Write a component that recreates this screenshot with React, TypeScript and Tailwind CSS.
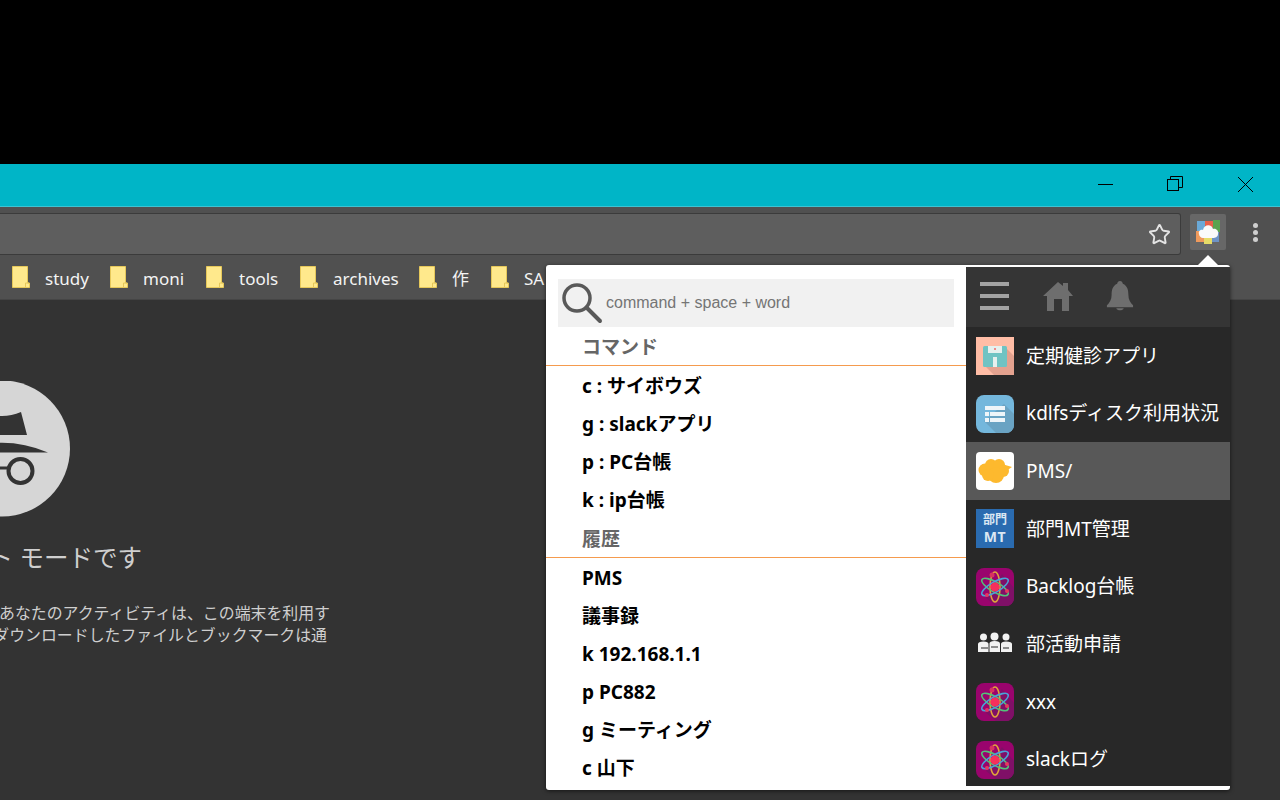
import { Star } from "lucide-react";
import type { ReactNode } from "react";

const sans = "font-['Noto_Sans','Noto_Sans_CJK_JP',sans-serif]";

function FloppyIcon() {
  return (
    <svg viewBox="0 0 38 38" className="h-[38px] w-[38px]">
      <rect width="38" height="38" fill="#ffbda6" />
      <path d="M10 30 L31 12 L38 19 V38 H18 Z" fill="#e3a28f" />
      <rect x="7" y="9" width="24" height="21" rx="1.5" fill="#6fc3c3" />
      <rect x="12" y="9" width="14" height="7" fill="#e6f0ee" />
      <rect x="18" y="11" width="2" height="2" fill="#ef8a8a" />
      <rect x="17" y="20" width="4" height="10" fill="#e6f0ee" />
    </svg>
  );
}

function ListIcon() {
  return (
    <svg viewBox="0 0 38 38" className="h-[38px] w-[38px] rounded-lg">
      <rect width="38" height="38" fill="#74b7dc" />
      <path d="M8 26 L28 9 L38 19 V38 H20 Z" fill="#6aa3c3" />
      <g fill="#eef5f9">
        <rect x="9" y="11" width="20" height="4" />
        <rect x="9" y="17" width="4" height="4" />
        <rect x="14" y="17" width="15" height="4" />
        <rect x="9" y="23" width="4" height="4" />
        <rect x="14" y="23" width="15" height="4" />
      </g>
    </svg>
  );
}

function CloudIcon() {
  return (
    <svg viewBox="0 0 38 38" className="h-[38px] w-[38px] rounded-sm" fill="#fdb92e">
      <rect width="38" height="38" fill="#ffffff" />
      <circle cx="9" cy="18" r="6.5" />
      <circle cx="15" cy="13" r="6" />
      <circle cx="23" cy="13" r="6" />
      <circle cx="27" cy="19" r="6" />
      <circle cx="20" cy="23" r="8" />
      <circle cx="12" cy="23" r="6" />
      <path d="M26 12 L36 15 L30 19 Z" />
    </svg>
  );
}

function DeptIcon() {
  return (
    <div className="flex h-[39px] w-[38px] flex-col items-center justify-center bg-[#2a6bb0] font-['Noto_Sans','Noto_Sans_CJK_JP',sans-serif] font-bold text-[#dbe7f3]">
      <span className="text-[12px] leading-[16px]">部門</span>
      <span className="text-[14px] leading-[18px] tracking-[0.5px]">MT</span>
    </div>
  );
}

function AtomIcon() {
  return (
    <svg viewBox="0 0 38 38" className="h-[38px] w-[38px] rounded-lg">
      <rect width="38" height="38" fill="#99046d" />
      <path d="M26 6 L38 20 V38 H20 L10 30 Z" fill="#7f1067" />
      <g fill="none" strokeWidth="1.6">
        <ellipse cx="19" cy="19" rx="5" ry="15" stroke="#e0a43a" />
        <ellipse cx="19" cy="19" rx="5" ry="15" stroke="#52c27a" transform="rotate(-60 19 19)" />
        <ellipse cx="19" cy="19" rx="5" ry="15" stroke="#4aa3d8" transform="rotate(60 19 19)" />
      </g>
      <circle cx="19" cy="19" r="4.5" fill="#f5305c" />
      <circle cx="16" cy="7" r="2.5" fill="#d8345f" />
      <circle cx="31" cy="23" r="2" fill="#e8365f" />
      <circle cx="11" cy="27" r="2" fill="#e8365f" />
    </svg>
  );
}

function PeopleIcon() {
  return (
    <svg viewBox="0 0 38 38" className="h-[38px] w-[38px]" fill="#f2f2f2">
      <circle cx="7.5" cy="12" r="3.5" />
      <circle cx="18.5" cy="11.5" r="4" />
      <circle cx="30" cy="12" r="3.5" />
      <path d="M2 27 V19 Q2 16.5 7.5 16.5 Q12.5 16.5 12.5 19 V27 Z" />
      <path d="M13.5 27 V18.5 Q13.5 16 18.5 16 Q24 16 24 18.5 V27 Z" />
      <path d="M25 27 V19 Q25 16.5 30 16.5 Q36 16.5 36 19 V27 Z" />
      <path d="M5 23 H12 M15 22 H22 M27 23 H33" stroke="#282828" strokeWidth="1" fill="none" />
    </svg>
  );
}

const commands = ["c : サイボウズ", "g : slackアプリ", "p : PC台帳", "k : ip台帳"];
const history = ["PMS", "議事録", "k 192.168.1.1", "p PC882", "g ミーティング", "c 山下"];
const bookmarks = [
  { label: "study", width: "w-[98px]" },
  { label: "moni", width: "w-[96px]" },
  { label: "tools", width: "w-[94px]" },
  { label: "archives", width: "w-[119px]" },
  { label: "作", width: "w-[72px]" },
  { label: "SA", width: "w-[60px]" },
];

const apps: { label: string; icon: ReactNode; active?: boolean }[] = [
  { label: "定期健診アプリ", icon: <FloppyIcon /> },
  { label: "kdlfsディスク利用状況", icon: <ListIcon /> },
  { label: "PMS/", icon: <CloudIcon />, active: true },
  { label: "部門MT管理", icon: <DeptIcon /> },
  { label: "Backlog台帳", icon: <AtomIcon /> },
  { label: "部活動申請", icon: <PeopleIcon /> },
  { label: "xxx", icon: <AtomIcon /> },
  { label: "slackログ", icon: <AtomIcon /> },
];

function FolderIcon() {
  return (
    <svg viewBox="0 0 18 22" className="h-[22px] w-[18px] shrink-0">
      <path d="M0.5 0.5 H15.5 V17 H17.5 V21.5 H0.5 Z" fill="#ffe98c" stroke="#e6c85a" />
      <path d="M13.5 21 V17 H17" fill="none" stroke="#e6c85a" />
    </svg>
  );
}

function TitleBar() {
  return (
    <div className="flex h-[43px] items-center justify-end border-b border-[#3cc3d2] bg-[#00b5c7]">
      <svg width="182" height="42" viewBox="0 0 182 42" fill="none" stroke="#000000" strokeWidth="1">
        <path d="M0 20.5 H15" />
        <rect x="69.5" y="15.5" width="11" height="11" />
        <path d="M72.5 15 V12.5 H84.5 V23.5 H81" />
        <path d="M140 13 L155 28 M155 13 L140 28" />
      </svg>
    </div>
  );
}

function Toolbar() {
  return (
    <div className="flex h-[48px] items-center bg-[#505050] pt-[6px]">
      <div className="flex h-[42px] w-[1181px] items-center justify-end rounded-r-[3px] border border-l-0 border-[#3b3b3b] bg-[#5e5e5e] pr-[9px]">
        <Star className="h-[23px] w-[23px] text-[#e4e4e4]" strokeWidth={2} />
      </div>
      <div className="ml-[9px] -mt-[4px] flex h-[36px] w-[36px] items-center justify-center rounded-[2px] bg-[#676767]">
        <svg viewBox="0 0 24 24" className="h-[24px] w-[24px]">
          <rect x="1" y="1" width="8" height="10" fill="#6aa9d8" />
          <rect x="17" y="0" width="7" height="12" fill="#5aa34f" />
          <rect x="0" y="11" width="8" height="11" fill="#ef9a5c" />
          <rect x="16" y="12" width="7" height="10" fill="#6d93c6" />
          <rect x="9" y="1" width="8" height="6" fill="#e8604a" />
          <rect x="8" y="17" width="8" height="7" fill="#e6dc68" />
          <path
            d="M3 14 C2 11 5 9 7 10 C8 4 16 4 17 9 C20 8 23 11 22 14 C22 17 19 18 17 18 H7 C5 18 3 16 3 14 Z"
            fill="#fafafa"
          />
        </svg>
      </div>
      <div className="ml-[27px] -mt-[3px] flex flex-col gap-[2.3px]">
        <span className="h-[5px] w-[5px] rounded-full bg-[#cfcfcf]" />
        <span className="h-[5px] w-[5px] rounded-full bg-[#cfcfcf]" />
        <span className="h-[5px] w-[5px] rounded-full bg-[#cfcfcf]" />
      </div>
    </div>
  );
}

function BookmarkBar() {
  return (
    <div className={`${sans} flex h-[45px] items-center border-b border-[#454545] bg-[#505050] pl-[12px] text-[17px] text-[#f4f4f4]`}>
      {bookmarks.map((b) => (
        <div key={b.label} className={`flex shrink-0 items-center gap-[15px] ${b.width}`}>
          <FolderIcon />
          <span className="pt-[4px]">{b.label}</span>
        </div>
      ))}
    </div>
  );
}

function IncognitoPage() {
  return (
    <div className={`${sans} flex flex-col text-[#cfcfcf]`}>
      <svg viewBox="-66 381 136 136" className="mt-[81px] -ml-[66px] h-[136px] w-[136px] shrink-0">
        <circle cx="2" cy="448.5" r="68" fill="#d6d6d6" />
        <path d="M-17 412 Q2 420 21 412 L27 435 L-23 435 Z" fill="#333333" />
        <path d="M-44 452.5 Q2 433 48 452.5 Z" fill="#333333" />
        <circle cx="20.5" cy="471" r="12" fill="none" stroke="#333333" strokeWidth="4" />
        <circle cx="-16" cy="471" r="12" fill="none" stroke="#333333" strokeWidth="4" />
        <path d="M-4 468 H8" stroke="#333333" strokeWidth="3" />
      </svg>
      <div className="mt-[25px] flex w-[142px] justify-end overflow-hidden whitespace-nowrap text-[24.5px] leading-[32px]">
        シークレット モードです
      </div>
      <div className="mt-[28px] flex w-[330px] justify-end overflow-hidden whitespace-nowrap text-[15.9px] leading-[22px]">
        あなたのアクティビティは、この端末を利用す
      </div>
      <div className="flex w-[327px] justify-end overflow-hidden whitespace-nowrap text-[15.9px] leading-[22px]">
        ダウンロードしたファイルとブックマークは通
      </div>
    </div>
  );
}

function SectionHeader({ children, className }: { children: ReactNode; className: string }) {
  return (
    <div className={`flex items-center border-b border-[#f59b4e] pl-[36px] pt-[3px] text-[19px] font-bold text-[#666666] ${className}`}>
      {children}
    </div>
  );
}

function CommandRow({ children }: { children: ReactNode }) {
  return <div className="flex h-[38px] items-center pl-[36px] pt-[3px] text-[19px] font-bold text-black">{children}</div>;
}

function Popup() {
  return (
    <div className={`${sans} absolute left-[546px] top-[265px] flex h-[525px] w-[684px] rounded-[3px] bg-white shadow-[0_1px_4px_rgba(0,0,0,0.6)]`}>
      <svg viewBox="0 0 20 10" className="absolute -top-[10px] left-[652px] h-[10px] w-[20px]">
        <path d="M0 10 L10 0 L20 10 Z" fill="#ffffff" />
      </svg>
      <div className="flex w-[420px] flex-col pt-[14px]">
        <div className="mx-[12px] flex h-[48px] items-center gap-[3px] bg-[#f1f1f1] pl-[3px]">
          <svg viewBox="0 0 42 42" className="h-[42px] w-[42px] shrink-0" fill="none" stroke="#595959">
            <circle cx="16" cy="16" r="13" strokeWidth="3.5" />
            <path d="M26 26 L39 39" strokeWidth="4" strokeLinecap="round" />
          </svg>
          <span className="font-['Liberation_Sans',sans-serif] text-[16px] text-[#757575]">command + space + word</span>
        </div>
        <SectionHeader className="h-[39px]">コマンド</SectionHeader>
        {commands.map((c) => (
          <CommandRow key={c}>{c}</CommandRow>
        ))}
        <SectionHeader className="h-[40px]">履歴</SectionHeader>
        {history.map((h) => (
          <CommandRow key={h}>{h}</CommandRow>
        ))}
      </div>
      <div className="mt-[2px] flex h-[519px] w-[264px] flex-col overflow-hidden bg-[#282828] text-[19px] text-white">
        <div className="flex h-[60px] shrink-0 items-center gap-[34px] bg-[#353535] pb-[2px] pl-[14px]">
          <div className="flex w-[29px] flex-col gap-[8px]">
            <span className="h-[4px] bg-[#a3a3a3]" />
            <span className="h-[4px] bg-[#a3a3a3]" />
            <span className="h-[4px] bg-[#a3a3a3]" />
          </div>
          <svg viewBox="0 0 30 30" className="h-[30px] w-[30px]" fill="#6e6e6e">
            <path d="M15 1 L20 5 V2 H25 V9 L30 15 H26 V30 H19 V18 H11 V30 H4 V15 H0 Z" />
          </svg>
          <svg viewBox="0 0 30 32" className="-ml-[1px] h-[30px] w-[28px]" fill="#6e6e6e">
            <path d="M15 0 C17 0 18 2 18 3 C23 5 24 10 24 15 C24 20 26 23 29 26 V28 H1 V26 C4 23 6 20 6 15 C6 10 7 5 12 3 C12 2 13 0 15 0 Z" />
            <path d="M11 29 H19 C18 32 12 32 11 29 Z" />
          </svg>
        </div>
        {apps.map((a) => (
          <div
            key={a.label}
            className={`flex h-[57.7px] shrink-0 items-center gap-[12px] pl-[10px] ${a.active ? "bg-[#585858]" : ""}`}
          >
            {a.icon}
            <span className="whitespace-nowrap">{a.label}</span>
          </div>
        ))}
      </div>
    </div>
  );
}

export default function App() {
  return (
    <div className="relative h-[800px] w-[1280px] overflow-hidden bg-[#333333]">
      <div className="h-[164px] bg-black" />
      <TitleBar />
      <Toolbar />
      <BookmarkBar />
      <IncognitoPage />
      <Popup />
    </div>
  );
}
